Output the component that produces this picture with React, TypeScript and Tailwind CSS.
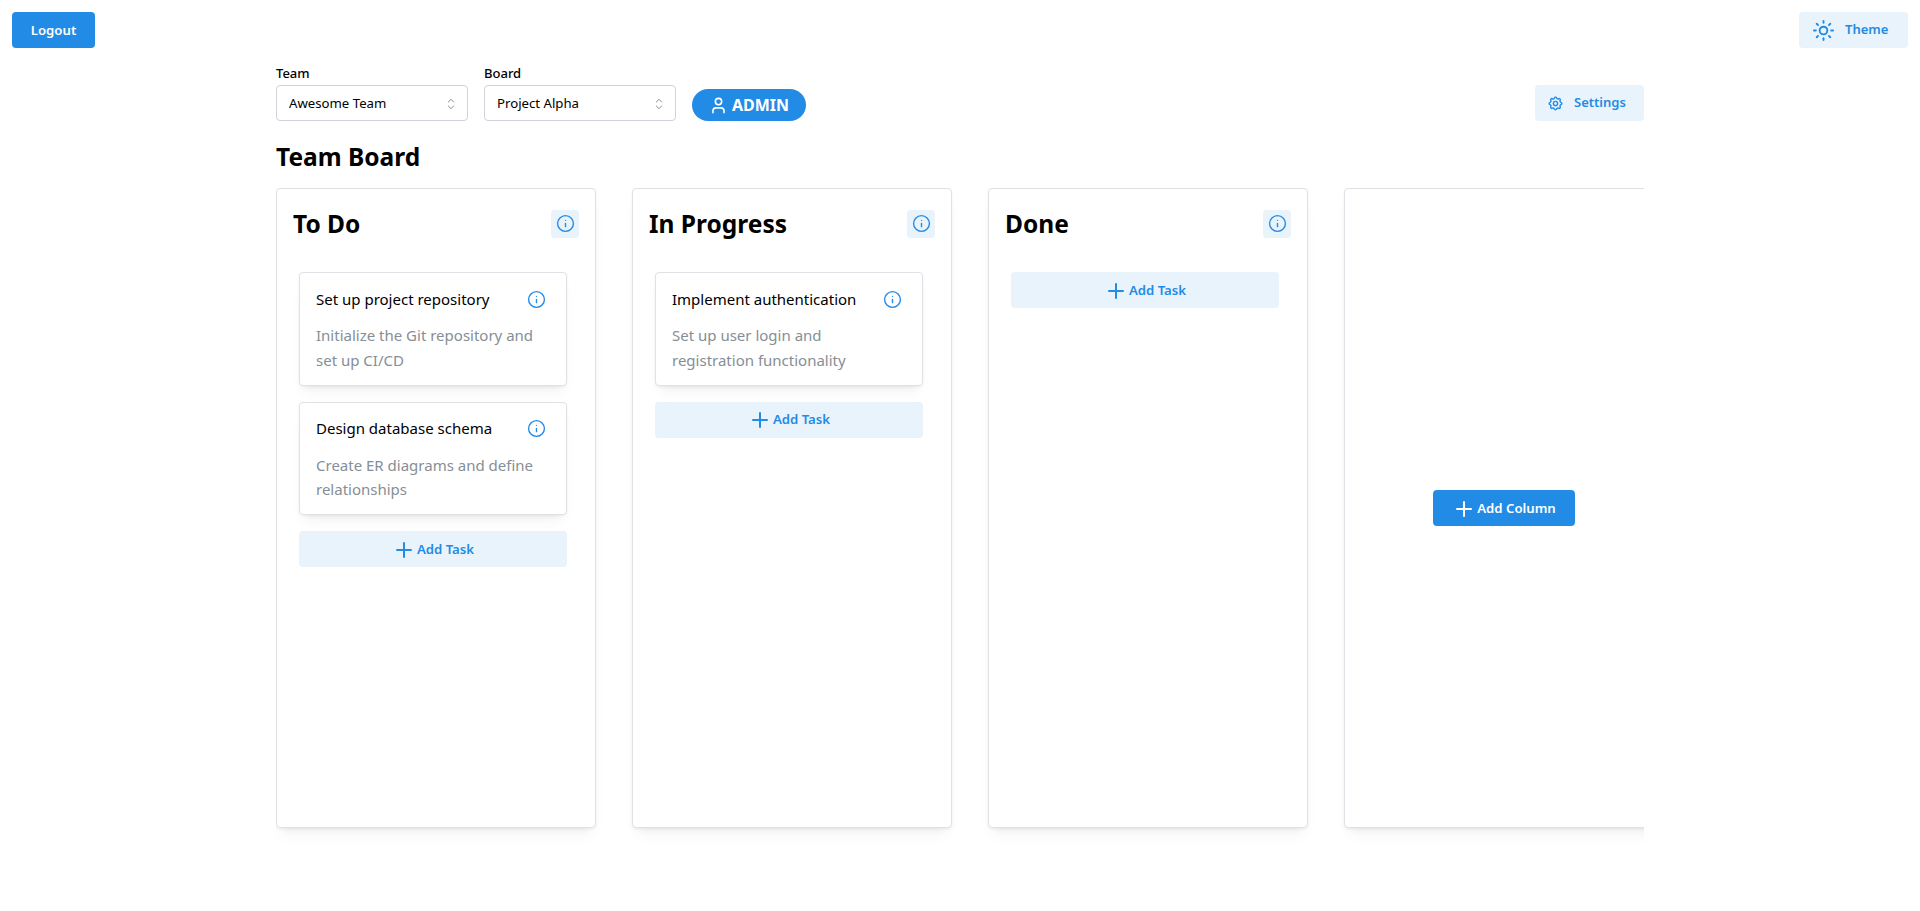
import { Info, Plus, Sun, User } from "lucide-react"
import { TbSelector, TbSettings } from "react-icons/tb"

const tasks: Record<string, { title: string; text: string[] }[]> = {
  "To Do": [
    { title: "Set up project repository", text: ["Initialize the Git repository and", "set up CI/CD"] },
    { title: "Design database schema", text: ["Create ER diagrams and define", "relationships"] },
  ],
  "In Progress": [
    { title: "Implement authentication", text: ["Set up user login and", "registration functionality"] },
  ],
  Done: [],
}

const shadow = "shadow-[0_1px_3px_rgba(0,0,0,0.05),0_10px_15px_-5px_rgba(0,0,0,0.05),0_7px_7px_-5px_rgba(0,0,0,0.04)]"

function Picker({ label, value }: { label: string; value: string }) {
  return (
    <div className="w-[192px]">
      <div className="mb-px text-[13px] leading-[21px] font-medium text-black">{label}</div>
      <div className="h-9 border border-[#ced4da] rounded flex items-center justify-between pl-3 pr-2 pt-px bg-white">
        <span className="text-[13.2px] text-black">{value}</span>
        <TbSelector className="w-4 h-4 text-[#868e96]" strokeWidth={1.5} />
      </div>
    </div>
  )
}

function TaskCard({ title, text }: { title: string; text: string[] }) {
  return (
    <div className={`w-full border border-[#dee2e6] rounded bg-white px-4 pt-[15px] pb-3 ${shadow}`}>
      <div className="flex items-center justify-between h-[22px]">
        <span className="text-[15px] text-black">{title}</span>
        <Info className="w-[19px] h-[19px] text-[#228be6] mr-[4px]" strokeWidth={1.75} />
      </div>
      <div className="mt-[13px] text-[15px] leading-[24.8px] text-[#868e96]">
        {text.map((t) => (
          <div key={t}>{t}</div>
        ))}
      </div>
    </div>
  )
}

function Column({ name }: { name: string }) {
  return (
    <div className={`w-[320px] h-[640px] shrink-0 border border-[#dee2e6] rounded bg-white ${shadow}`}>
      <div className="flex items-center justify-between pl-4 pr-4 pt-[18px]">
        <h2 className="text-[24.5px] leading-[33px] font-bold text-black">{name}</h2>
        <button className="w-7 h-7 rounded bg-[#e9f3fc] flex items-center justify-center">
          <Info className="w-[19px] h-[19px] text-[#228be6]" strokeWidth={1.75} />
        </button>
      </div>
      <div className="flex flex-col gap-4 pl-[22px] pr-[28px] mt-[32px]">
        {tasks[name].map((t) => (
          <TaskCard key={t.title} {...t} />
        ))}
        <button className="h-9 pt-px rounded bg-[#e9f3fc] text-[#228be6] text-[13.2px] font-semibold flex items-center justify-center gap-px">
          <Plus className="w-6 h-6" strokeWidth={2} />
          Add Task
        </button>
      </div>
    </div>
  )
}

export default function App() {
  return (
    <div className="min-h-[911px] bg-white font-['Noto_Sans','Open_Sans',sans-serif]">
      <div className="flex items-start justify-between px-3 pt-3">
        <button className="w-[83px] h-9 pt-px rounded bg-[#228be6] text-white text-[13.2px] font-semibold">Logout</button>
        <button className="w-[109px] h-9 rounded bg-[#e9f3fc] text-[#228be6] text-[13px] font-semibold flex items-center pl-[13px] gap-[10px]">
          <Sun className="w-[23px] h-[23px]" strokeWidth={2} />
          Theme
        </button>
      </div>
      <div className="w-[1368px] ml-[276px] mt-[15px]">
        <div className="flex items-end justify-between">
          <div className="flex items-end gap-4">
            <Picker label="Team" value="Awesome Team" />
            <Picker label="Board" value="Project Alpha" />
            <div className="h-8 w-[114px] rounded-full bg-[#228be6] text-white text-[16px] font-bold flex items-center justify-center gap-1">
              <User className="w-[19px] h-[19px]" strokeWidth={2} />
              ADMIN
            </div>
          </div>
          <button className="w-[109px] h-9 rounded bg-[#e9f3fc] text-[#228be6] text-[13px] font-semibold flex items-center pl-[12px] gap-[10px]">
            <TbSettings className="w-[17px] h-[17px]" />
            Settings
          </button>
        </div>
        <h1 className="mt-[18px] text-[24.5px] leading-[36px] font-bold text-black">Team Board</h1>
        <div className="mt-[13px] flex gap-9 overflow-hidden pb-10">
          {Object.keys(tasks).map((name) => (
            <Column key={name} name={name} />
          ))}
          <div className={`w-[320px] h-[640px] shrink-0 border border-[#dee2e6] rounded bg-white flex items-center justify-center ${shadow}`}>
            <button className="w-[142px] h-9 pt-px rounded bg-[#228be6] text-white text-[13.2px] font-semibold flex items-center justify-center gap-px">
              <Plus className="w-6 h-6" strokeWidth={2} />
              Add Column
            </button>
          </div>
        </div>
      </div>
    </div>
  )
}
